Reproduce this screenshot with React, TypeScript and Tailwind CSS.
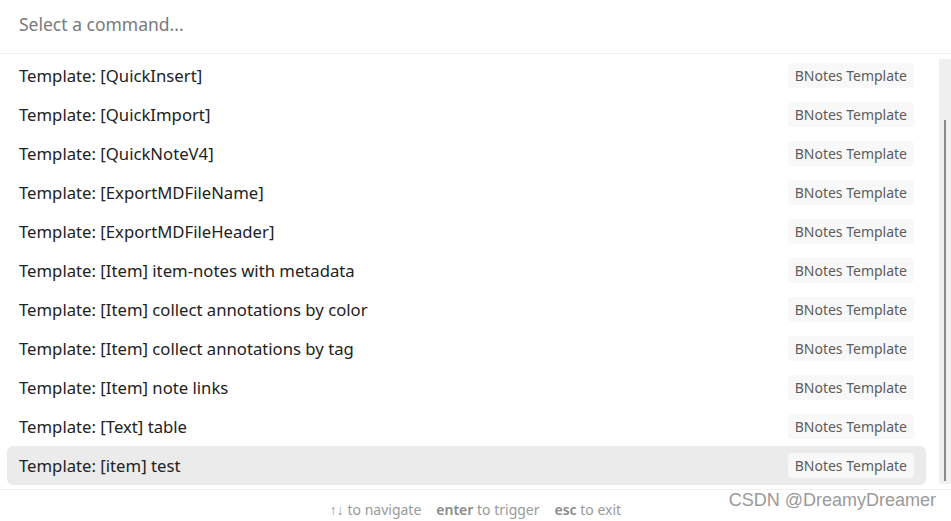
const ITEMS = [
  "Template: [QuickInsert]",
  "Template: [QuickImport]",
  "Template: [QuickNoteV4]",
  "Template: [ExportMDFileName]",
  "Template: [ExportMDFileHeader]",
  "Template: [Item] item-notes with metadata",
  "Template: [Item] collect annotations by color",
  "Template: [Item] collect annotations by tag",
  "Template: [Item] note links",
  "Template: [Text] table",
  "Template: [item] test",
];

const SELECTED = 10;

export default function App() {
  return (
    <div className="relative flex h-[521px] w-[951px] flex-col overflow-hidden bg-white font-['Noto_Sans',sans-serif]">
      {/* Prompt input */}
      <div className="flex h-[54px] shrink-0 items-center border-b border-[#f0f0f0] px-[19px] pb-[4px]">
        <span className="text-[17.5px] text-[#7a7a7a]">Select a command...</span>
      </div>

      {/* Results + scrollbar */}
      <div className="flex h-[435px] shrink-0 pt-[2px]">
        <div className="flex flex-1 flex-col pl-[7px] pr-[13px]">
          {ITEMS.map((item, i) => (
            <div
              key={item}
              className={`flex h-[39px] shrink-0 items-center justify-between rounded-[6px] pl-[12px] pr-[12px] ${
                i === SELECTED ? "bg-[#ebebeb]" : ""
              }`}
            >
              <span className="text-[16.7px] text-[#222]">{item}</span>
              <span className="rounded-[4px] bg-[#f8f8f8] px-[7px] py-[2px] text-[14px] text-[#5c5c5c]">
                BNotes Template
              </span>
            </div>
          ))}
        </div>
        <div className="mb-[5px] mt-[3px] flex w-[12px] justify-center bg-[#f0f0f0]">
          <div className="mt-[61px] mb-[3px] w-[2px] bg-[#8a8a8a]" />
        </div>
      </div>

      {/* Footer hints */}
      <div className="flex flex-1 items-center justify-center gap-[15px] border-t border-[#f0f0f0] pt-[8px] text-[14px] text-[#9a9a9a]">
        <span>
          <span className="font-semibold">↑↓</span> to navigate
        </span>
        <span>
          <span className="font-semibold text-[#8a8a8a]">enter</span> to trigger
        </span>
        <span>
          <span className="font-semibold text-[#8a8a8a]">esc</span> to exit
        </span>
      </div>

      {/* Watermark */}
      <span className="absolute bottom-[7px] right-[15px] font-['Liberation_Sans',sans-serif] text-[18px] text-[#9a9a9a]">
        CSDN @DreamyDreamer
      </span>
    </div>
  );
}
